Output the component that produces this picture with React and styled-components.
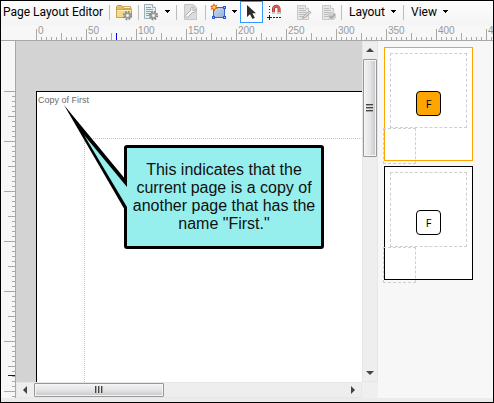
import React from "react";
import styled, { createGlobalStyle } from "styled-components";

const GlobalStyle = createGlobalStyle`
  * { box-sizing: border-box; }
  body { margin: 0; background: #f7f7f7; font-family: Roboto, "Noto Sans", sans-serif; }
  button { font: inherit; color: inherit; border: 0; margin: 0; padding: 0; background: none; }
  svg { display: block; flex: none; }
`;

const Frame = styled.div`
  display: flex;
  flex-direction: column;
  min-height: 100vh;
  border: 1px solid #000;
  overflow: hidden;
`;

const Toolbar = styled.header`
  display: flex;
  height: 24px;
  flex: none;
  overflow: hidden;
  background: linear-gradient(#fdfdfd, #f4f4f4);
  font-size: 12px;
  line-height: 22px;
  color: #000;
`;

const Title = styled.h1`
  margin: 0;
  width: 108px;
  padding-left: 2px;
  flex: none;
  font-size: 12px;
  font-weight: 400;
  line-height: 22px;
  white-space: nowrap;
`;

const Separator = styled.span`
  flex: none;
  width: 1px;
  height: 15px;
  margin-top: 4px;
  background: #bdbdbd;
`;

const ToolButton = styled.button`
  display: flex;
  flex: none;
  align-items: center;
  justify-content: ${(p) => (p.$menu ? "flex-start" : "center")};
  gap: 5px;
  padding-left: ${(p) => (p.$menu ? "4px" : "0")};
  margin-left: ${(p) => (p.$spaced ? "5px" : "0")};
  width: ${(p) => p.$width}px;
  height: 22px;
  ${(p) => p.$selected && "border: 1px solid #3399ff; background: #fdfdfd;"}
`;

const MenuButton = styled.button`
  display: flex;
  flex: none;
  align-items: center;
  gap: 6px;
  width: 61px;
  height: 22px;
  padding-left: 7px;
`;

const Ruler = styled.div`
  display: flex;
  flex: none;
  height: 16px;
  padding-left: 35px;
  overflow: hidden;
  border-bottom: 1px solid #a8a8a8;
  background: #f7f7f7;
`;

const RulerStep = styled.span`
  flex: none;
  width: 50px;
  padding-left: 2px;
  font: 10px/12px "Liberation Sans", Arial, sans-serif;
  color: #999;
  background:
    ${(p) => p.$marker && "linear-gradient(#0000ff, #0000ff) 30px 8px / 1px 8px no-repeat,"}
    linear-gradient(#a8a8a8, #a8a8a8) 0 4px / 1px 12px no-repeat,
    linear-gradient(#a8a8a8, #a8a8a8) 25px 8px / 1px 8px no-repeat,
    linear-gradient(90deg, #a8a8a8 1px, transparent 1px) 0 12px / 5px 4px repeat-x;
`;

const Body = styled.main`
  display: flex;
  flex: 1;
`;

const SideRuler = styled.div`
  flex: none;
  width: 15px;
  padding-top: 50px;
  border-right: 1px solid #a8a8a8;
  background:
    linear-gradient(#0000ff, #0000ff) 7px 334px / 7px 1px no-repeat,
    linear-gradient(#a8a8a8 1px, transparent 1px) 3px 50px / 11px 50px repeat-y content-box,
    linear-gradient(#a8a8a8 1px, transparent 1px) 7px 0 / 7px 25px repeat-y content-box,
    linear-gradient(#a8a8a8 1px, transparent 1px) 11px 0 / 3px 5px repeat-y content-box,
    #f7f7f7;
`;

const Workspace = styled.section`
  display: grid;
  flex: 1;
  min-width: 0;
  grid-template-columns: minmax(0, 1fr) 16px;
  grid-template-rows: 1fr 16px;
  background: #efefef;
`;

const Canvas = styled.div`
  display: flex;
  padding: 50px 0 0 20px;
  background: #d3d3d3;
`;

const Page = styled.article`
  position: relative;
  display: flex;
  flex: 1;
  padding: 46px 0 0 47px;
  border-top: 1px solid #000;
  border-left: 1px solid #000;
  background: #fff;
`;

const MarginGuide = styled.div`
  flex: 1;
  border-top: 1px dotted #c4c4c4;
  border-left: 1px dotted #c4c4c4;
`;

const PageTag = styled.span`
  position: absolute;
  left: 1px;
  top: 2px;
  font: 9px/12px "Liberation Sans", Arial, sans-serif;
  color: #6c6c6c;
  white-space: nowrap;
`;

const Callout = styled.p`
  position: absolute;
  left: 87px;
  top: 53px;
  width: 200px;
  margin: 0;
  padding: 13px 4px;
  border: 3px solid #000;
  border-radius: 3px;
  background: #96efed;
  font: 16px/18px "Liberation Sans", Arial, sans-serif;
  color: #111;
  text-align: center;
`;

const Tail = styled.svg`
  position: absolute;
  left: 23px;
  top: 8px;
`;

const ScrollBar = styled.div`
  display: flex;
  flex-direction: ${(p) => (p.$vertical ? "column" : "row")};
  border: 1px solid #e6e6e6;
  background: #eeeeee;
`;

const ScrollArrow = styled.button`
  display: flex;
  flex: none;
  align-items: center;
  justify-content: center;
  width: ${(p) => (p.$vertical ? "14px" : "17px")};
  height: ${(p) => (p.$vertical ? "17px" : "14px")};
`;

const ScrollTrack = styled.div`
  display: flex;
  flex: 1;
  flex-direction: ${(p) => (p.$vertical ? "column" : "row")};
`;

const ScrollThumb = styled.div`
  display: flex;
  align-items: center;
  justify-content: center;
  flex: 0 0 ${(p) => (p.$vertical ? "32%" : "42%")};
  border: 1px solid #979797;
  border-radius: 1px;
  box-shadow: inset 0 0 0 1px #f5f5f5;
  background: linear-gradient(${(p) => (p.$vertical ? "90deg" : "180deg")}, #f3f3f3, #e4e4e6 50%, #c6c6ca);
`;

const Sidebar = styled.aside`
  display: flex;
  flex: none;
  flex-direction: column;
  gap: 5px;
  width: 115px;
  padding: 6px 20px 0 6px;
  background: #f7f7f7;
`;

const Thumbnail = styled.button`
  position: relative;
  display: flex;
  flex-direction: column;
  height: 114px;
  padding: 5px;
  border: 1px solid ${(p) => (p.$active ? "#ffa500" : "#000")};
  background: #fff;
`;

const ThumbBody = styled.span`
  display: flex;
  justify-content: center;
  align-items: flex-end;
  width: 100%;
  height: 75px;
  padding-bottom: 11px;
  border: 1px dashed #cfcfcf;
`;

const CornerFrame = styled.span`
  position: absolute;
  left: -2px;
  bottom: -4px;
  width: 33px;
  height: 36px;
  border: 1px dashed #cfcfcf;
`;

const Badge = styled.span`
  width: 25px;
  height: 25px;
  border: 1px solid #000;
  border-radius: 4px;
  background: ${(p) => (p.$active ? "#ffa500" : "#fff")};
  font: 11px/24px "Open Sans", sans-serif;
  color: #000;
  text-align: center;
`;

const Status = styled.footer`
  flex: none;
  height: 4px;
  background: #ebebeb;
`;

const DropArrow = () => (
  <svg width="6" height="4" viewBox="0 0 6 4" shapeRendering="crispEdges">
    <path d="M0 0h5v1H0zM1 1h3v1H1zM2 2h1v1H2z" fill="#000" />
  </svg>
);

const Gear = ({ x, y }) => (
  <g transform={`translate(${x} ${y})`}>
    <circle r="3.7" fill="none" stroke="#8b8b8b" strokeWidth="2" strokeDasharray="1.7 1.2" />
    <circle r="2.4" fill="#d5d5d5" stroke="#969696" strokeWidth="1.4" />
    <circle r="0.9" fill="#fff" />
  </g>
);

const FolderIcon = () => (
  <svg width="18" height="18" viewBox="0 0 18 18">
    <path d="M1.5 14.5V3.5l1-1h4l1.5 2h8v9.500z" fill="#e3bf62" stroke="#c09a43" />
    <path d="M8.500 3.500h7v2h-7z" fill="#fff4c8" stroke="#c8a65a" />
    <path d="M1.500 6.500h15v8h-15z" fill="#f3d98c" stroke="#c9a652" />
    <path d="M2.500 7.500h13" stroke="#fff0b8" />
    <Gear x={12.5} y={12.5} />
  </svg>
);

const Sheet = ({ muted }) => (
  <g>
    <path d="M1.500 1.500h8l3 3v11h-11z" fill={muted ? "#e6e6e6" : "#e6eff1"} stroke={muted ? "#c8c8c8" : "#9eb0b5"} />
    <path d="M9.500 1.500v3h3" fill="#fff" stroke={muted ? "#c8c8c8" : "#9eb0b5"} />
    <path d="M3 4.500h5M3 6.500h7M3 8.500h7M3 10.500h6M3 12.500h5" stroke={muted ? "#bdbdbd" : "#88a5ab"} />
  </g>
);

const PageGearIcon = () => (
  <svg width="17" height="18" viewBox="0 0 17 18"><Sheet /><Gear x={10.5} y={12.5} /></svg>
);

const WrenchIcon = () => (
  <svg width="16" height="16" viewBox="0 0 16 16">
    <path d="M1.500.5h9l3 3v12h-12z" fill="#dcdcdc" stroke="#c6c6c6" />
    <path d="M12.500 5l-2 2-1.500-1.500 2-2c-2-1-4 .7-3.500 3L3 11c-1.300 1.300.7 3.300 2 2l4.500-4.500c2.300.5 4-1.500 3-3.500z" fill="#fafafa" stroke="#aaa" />
  </svg>
);

const RegionIcon = () => (
  <svg width="17" height="18" viewBox="0 0 17 18">
    <defs>
      <linearGradient id="regionFill" x1="0" y1="0" x2="1" y2="1">
        <stop offset="0" stopColor="#c9dcf2" /><stop offset="1" stopColor="#8fb0d8" />
      </linearGradient>
    </defs>
    <path d="M3.500 4.500h11v10h-11z" fill="url(#regionFill)" stroke="#3c62c4" />
    <path d="M13 3h3v3h-3zM2 13h3v3H2zM13 13h3v3h-3z" fill="#2f52d0" />
    <path d="M14 4h1v1h-1zM3 14h1v1H3zM14 14h1v1h-1z" fill="#b9cbff" />
    <path d="M4 0l1 2.500L7.500 1.500 6.300 4 8 5.500 5.500 6 4.500 8.500 3 6 .5 7 1.500 4.500 0 3l2.700-.5z" fill="#e8601c" />
    <circle cx="4" cy="4.200" r="1.500" fill="#ffd84a" />
  </svg>
);

const CursorIcon = () => (
  <svg width="14" height="16" viewBox="0 0 14 16">
    <path d="M2 1v12l3-2.700L7.500 15l2.300-1.200L7.400 9.300H11z" fill="#2c2c2c" />
  </svg>
);

const MagnetIcon = () => (
  <svg width="16" height="18" viewBox="0 0 16 18">
    <path d="M6.500 11V6a2.800 2.800 0 0 1 5.600 0v5" fill="none" stroke="#a83232" strokeWidth="3" />
    <path d="M6.500 9V6a2.800 2.800 0 0 1 5.600 0v3" fill="none" stroke="#e06561" strokeWidth="1.500" />
    <path d="M5 10h3M10.600 10h3" stroke="#c9c9c9" strokeWidth="2" />
    <path d="M2.500 3v14" stroke="#222" strokeDasharray="1 2" />
    <path d="M0 14.500h15" stroke="#222" strokeDasharray="2 1" />
    <path d="M2.500 12v5M0 14.500h5" stroke="#222" />
  </svg>
);

const PageEditIcon = () => (
  <svg width="16" height="17" viewBox="0 0 16 17">
    <Sheet muted />
    <path d="M6.500 14.500l1-2.500 6-5 1.500 1.500-6 5z" fill="#d9d9d9" stroke="#a9a9a9" />
  </svg>
);

const PageCheckIcon = () => (
  <svg width="16" height="17" viewBox="0 0 16 17">
    <Sheet muted />
    <circle cx="11" cy="12" r="4" fill="#cfcfcf" />
    <path d="M8.500 12l2 2 3.500-4" fill="none" stroke="#a2a2a2" strokeWidth="1.500" />
  </svg>
);

const arrowPaths = {
  up: "M0 5h8L4 1z",
  down: "M0 2h8L4 6z",
  left: "M5 0v8L1 4z",
  right: "M2 0v8l4-4z",
};

const Arrow = ({ direction }) => (
  <svg width="8" height="8" viewBox="0 0 8 8">
    <path d={arrowPaths[direction]} fill="#444" />
  </svg>
);

const Grip = ({ vertical }) => (
  <svg width="8" height="8" viewBox="0 0 8 8" shapeRendering="crispEdges">
    <path d={vertical ? "M0 0h7v1H0zM0 3h7v1H0zM0 6h7v1H0z" : "M0 0h1v7H0zM3 0h1v7H3zM6 0h1v7H6z"} fill="#444" />
    <path d={vertical ? "M0 1h7v1H0zM0 4h7v1H0zM0 7h7v1H0z" : "M1 0h1v7H1zM4 0h1v7H4zM7 0h1v7H7z"} fill="#aaa" />
  </svg>
);

const rulerLabels = [0, 50, 100, 150, 200, 250, 300, 350, 400, 450];

const Scroller = ({ vertical }) => (
  <ScrollBar $vertical={vertical}>
    <ScrollArrow $vertical={vertical} aria-label={vertical ? "Scroll up" : "Scroll left"}>
      <Arrow direction={vertical ? "up" : "left"} />
    </ScrollArrow>
    <ScrollTrack $vertical={vertical}>
      <ScrollThumb $vertical={vertical}><Grip vertical={vertical} /></ScrollThumb>
    </ScrollTrack>
    <ScrollArrow $vertical={vertical} aria-label={vertical ? "Scroll down" : "Scroll right"}>
      <Arrow direction={vertical ? "down" : "right"} />
    </ScrollArrow>
  </ScrollBar>
);

const PageThumbnail = ({ active }) => (
  <Thumbnail $active={active} aria-pressed={!!active}>
    <ThumbBody><Badge $active={active}>F</Badge></ThumbBody>
    <CornerFrame />
  </Thumbnail>
);

export default function App() {
  return (
    <Frame>
      <GlobalStyle />
      <Toolbar>
        <Title>Page Layout Editor</Title>
        <Separator />
        <ToolButton $width={28} aria-label="Page properties"><FolderIcon /></ToolButton>
        <Separator />
        <ToolButton $width={37} $menu aria-label="Page options"><PageGearIcon /><DropArrow /></ToolButton>
        <Separator />
        <ToolButton $width={28} aria-label="Frame properties"><WrenchIcon /></ToolButton>
        <Separator />
        <ToolButton $width={34} $menu aria-label="Add frame"><RegionIcon /><DropArrow /></ToolButton>
        <ToolButton $width={23} $selected aria-label="Select"><CursorIcon /></ToolButton>
        <ToolButton $width={24} aria-label="Snap to grid"><MagnetIcon /></ToolButton>
        <ToolButton $width={24} $spaced aria-label="Edit page"><PageEditIcon /></ToolButton>
        <ToolButton $width={25} aria-label="Apply page"><PageCheckIcon /></ToolButton>
        <Separator />
        <MenuButton>Layout <DropArrow /></MenuButton>
        <Separator />
        <MenuButton>View <DropArrow /></MenuButton>
      </Toolbar>
      <Ruler>
        {rulerLabels.map((n) => (
          <RulerStep key={n} $marker={n === 50}>{n}</RulerStep>
        ))}
      </Ruler>
      <Body>
        <SideRuler />
        <Workspace>
          <Canvas>
            <Page>
              <MarginGuide />
              <PageTag>Copy of First</PageTag>
              <Callout>This indicates that the current page is a copy of another page that has the name "First."</Callout>
              <Tail width="72" height="118" viewBox="0 0 72 118">
                <path d="M4 5L66 80V112z" fill="#000" />
                <path d="M24 35L67 87V107z" fill="#96efed" />
              </Tail>
            </Page>
          </Canvas>
          <Scroller vertical />
          <Scroller />
        </Workspace>
        <Sidebar>
          <PageThumbnail active />
          <PageThumbnail />
        </Sidebar>
      </Body>
      <Status />
    </Frame>
  );
}
